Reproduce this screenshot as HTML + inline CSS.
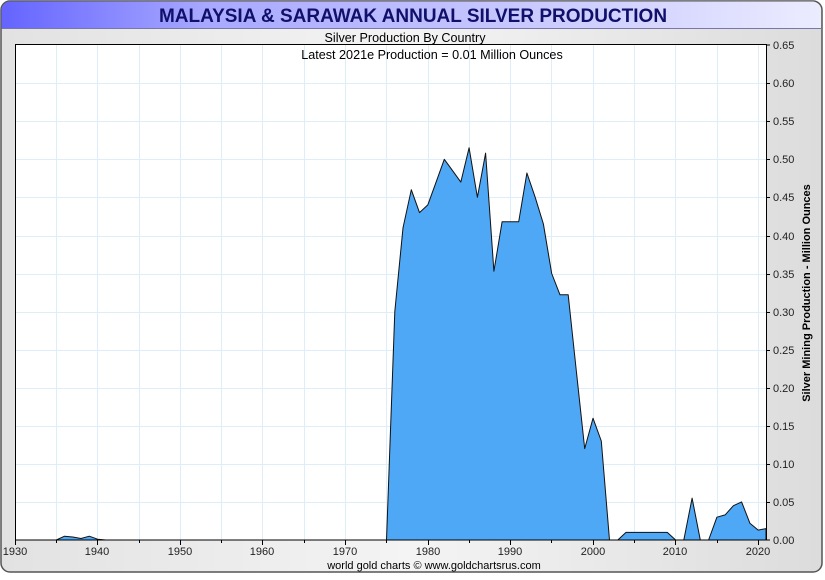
<!DOCTYPE html><html><head><style>body{margin:0;width:825px;height:575px;overflow:hidden;background:#fff;font-family:"Liberation Sans",sans-serif}</style></head><body>
<svg width="825" height="575" xmlns="http://www.w3.org/2000/svg" font-family="Liberation Sans, sans-serif">
<defs>
<linearGradient id="bg" x1="0" x2="1"><stop offset="0" stop-color="#e2e2e2"/><stop offset="0.5" stop-color="#f4f4f4"/><stop offset="1" stop-color="#dcdcdc"/></linearGradient>
<linearGradient id="tb" x1="0" x2="1"><stop offset="0" stop-color="#6464ff"/><stop offset="0.25" stop-color="#a8a8ff"/><stop offset="0.8" stop-color="#d6d6ff"/><stop offset="1" stop-color="#ececff"/></linearGradient>
</defs>
<rect x="1" y="1" width="821" height="571" rx="9" fill="url(#bg)" stroke="#555" stroke-width="1.5"/>
<path d="M1.5 28 V10 A9 9 0 0 1 10.5 1.5 H812 A9 9 0 0 1 821 10 V28 Z" fill="url(#tb)"/>
<line x1="1.5" y1="28.5" x2="821" y2="28.5" stroke="#7777aa"/>
<text x="413" y="22" text-anchor="middle" font-size="19" font-weight="bold" fill="#10106a">MALAYSIA &amp; SARAWAK ANNUAL SILVER PRODUCTION</text>
<rect x="15.5" y="44.5" width="751" height="495.5" fill="#fff"/>
<g stroke="#ddeef8" stroke-width="1">
<path d="M56.5 45V540M97.5 45V540M139.5 45V540M180.5 45V540M221.5 45V540M262.5 45V540M304.5 45V540M345.5 45V540M386.5 45V540M428.5 45V540M469.5 45V540M510.5 45V540M551.5 45V540M593.5 45V540M634.5 45V540M675.5 45V540M717.5 45V540M758.5 45V540"/>
<path d="M16 502.5H766M16 464.5H766M16 426.5H766M16 388.5H766M16 350.5H766M16 312.5H766M16 274.5H766M16 236.5H766M16 197.5H766M16 159.5H766M16 121.5H766M16 83.5H766"/>
</g>
<polygon fill="#4ea8f6" stroke="#111" stroke-width="1" stroke-linejoin="round" points="56.3,540 64.5,536.2 72.8,537 81,538.5 89.3,536.2 97.6,539.2 105.8,540 386.5,540 394.8,311.5 403,227.8 411.3,189.7 419.5,212.6 427.8,204.9 436.1,182.1 444.3,159.3 452.6,170.7 460.8,182.1 469.1,147.8 477.4,197.3 485.6,153.1 493.9,271.2 502.1,221.7 510.4,221.7 518.7,221.7 526.9,173 535.2,197.3 543.4,224 551.7,273.5 560,294.8 568.2,294.8 576.5,372.5 584.7,448.6 593,418.2 601.3,441 609.5,540 617.8,540 626,532.4 667.3,532.4 675.6,540 683.8,540 692.1,498.1 700.3,540 708.6,540 716.9,517.2 725.1,514.9 733.4,505.7 741.6,501.9 749.9,523.2 758.2,530.1 766,528.6 766,540"/>
<rect x="15.5" y="44.5" width="751" height="495.5" fill="none" stroke="#000"/>
<text x="405" y="42" text-anchor="middle" font-size="12.6">Silver Production By Country</text>
<text x="432" y="59" text-anchor="middle" font-size="12.6">Latest 2021e Production = 0.01 Million Ounces</text>
<g stroke="#000"><path d="M15.5 540v5M56.5 540v3M97.5 540v5M139.5 540v3M180.5 540v5M221.5 540v3M262.5 540v5M304.5 540v3M345.5 540v5M386.5 540v3M428.5 540v5M469.5 540v3M510.5 540v5M551.5 540v3M593.5 540v5M634.5 540v3M675.5 540v5M717.5 540v3M758.5 540v5"/>
<path d="M766 540h4M766 502.5h4M766 464.5h4M766 426.5h4M766 388.5h4M766 350.5h4M766 312.5h4M766 274.5h4M766 236.5h4M766 197.5h4M766 159.5h4M766 121.5h4M766 83.5h4M766 45h4"/></g>
<g font-size="11" fill="#222" text-anchor="middle">
<text x="15" y="555">1930</text><text x="97" y="555">1940</text><text x="180" y="555">1950</text><text x="262" y="555">1960</text><text x="345" y="555">1970</text><text x="428" y="555">1980</text><text x="510" y="555">1990</text><text x="593" y="555">2000</text><text x="675" y="555">2010</text><text x="758" y="555">2020</text>
</g>
<g font-size="11" fill="#222">
<text x="773" y="544">0.00</text><text x="773" y="506">0.05</text><text x="773" y="468">0.10</text><text x="773" y="430">0.15</text><text x="773" y="392">0.20</text><text x="773" y="354">0.25</text><text x="773" y="316">0.30</text><text x="773" y="278">0.35</text><text x="773" y="240">0.40</text><text x="773" y="201">0.45</text><text x="773" y="163">0.50</text><text x="773" y="125">0.55</text><text x="773" y="87">0.60</text><text x="773" y="49">0.65</text>
</g>
<text transform="translate(810,293) rotate(-90)" text-anchor="middle" font-size="11" font-weight="bold">Silver Mining Production - Million Ounces</text>
<text x="434" y="569" text-anchor="middle" font-size="11">world gold charts © www.goldchartsrus.com</text>
</svg>
</body></html>
